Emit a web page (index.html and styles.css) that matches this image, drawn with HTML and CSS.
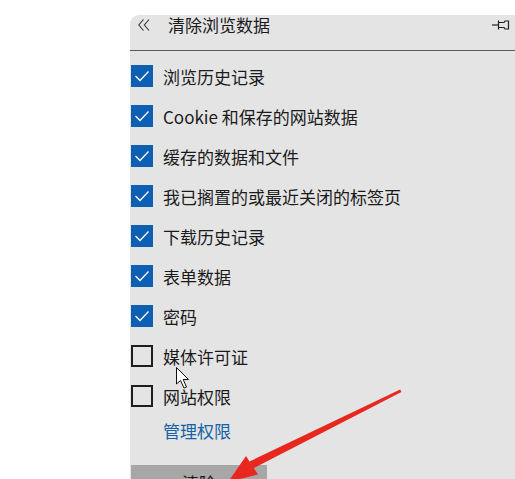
FILE: index.html
```html
<!DOCTYPE html>
<html lang="zh-CN">
<head>
    <meta charset="UTF-8">
    <meta name="viewport" content="width=device-width, initial-scale=1.0">
    <title>清除浏览数据</title>
    <link rel="stylesheet" href="styles.css">
</head>
<body>
    <div class="panel">
        <div class="panel-header">
            <svg class="back" width="12" height="12" viewBox="0 0 12 12">
                <polyline points="5.5,0.5 0.8,6 5.5,11.5" fill="none" stroke="#333" stroke-width="1.1"/>
                <polyline points="11,0.5 6.3,6 11,11.5" fill="none" stroke="#333" stroke-width="1.1"/>
            </svg>
            <span class="title">清除浏览数据</span>
            <svg class="pin" width="18" height="12" viewBox="0 0 18 12">
                <line x1="0" y1="6" x2="6" y2="6" stroke="#222" stroke-width="1.2"/>
                <line x1="6.5" y1="1.5" x2="6.5" y2="10.5" stroke="#222" stroke-width="1.2"/>
                <path d="M7 3.5 H12 L13 2 H16.5 V10 H13 L12 8.5 H7" fill="none" stroke="#222" stroke-width="1.2"/>
            </svg>
        </div>

        <ul class="options">
            <li class="option"><span class="box checked"><svg viewBox="0 0 22 22"><polyline points="4.5,11 9,15.5 17.5,6.5"/></svg></span>浏览历史记录</li>
            <li class="option"><span class="box checked"><svg viewBox="0 0 22 22"><polyline points="4.5,11 9,15.5 17.5,6.5"/></svg></span>Cookie 和保存的网站数据</li>
            <li class="option"><span class="box checked"><svg viewBox="0 0 22 22"><polyline points="4.5,11 9,15.5 17.5,6.5"/></svg></span>缓存的数据和文件</li>
            <li class="option"><span class="box checked"><svg viewBox="0 0 22 22"><polyline points="4.5,11 9,15.5 17.5,6.5"/></svg></span>我已搁置的或最近关闭的标签页</li>
            <li class="option"><span class="box checked"><svg viewBox="0 0 22 22"><polyline points="4.5,11 9,15.5 17.5,6.5"/></svg></span>下载历史记录</li>
            <li class="option"><span class="box checked"><svg viewBox="0 0 22 22"><polyline points="4.5,11 9,15.5 17.5,6.5"/></svg></span>表单数据</li>
            <li class="option"><span class="box checked"><svg viewBox="0 0 22 22"><polyline points="4.5,11 9,15.5 17.5,6.5"/></svg></span>密码</li>
            <li class="option"><span class="box"></span>媒体许可证</li>
            <li class="option"><span class="box"></span>网站权限</li>
        </ul>

        <a class="manage-link" href="#">管理权限</a>

        <button class="clear-btn" type="button">清除</button>
    </div>

    <!--标注：鼠标指针和红色箭头 -->
    <svg class="overlay" width="515" height="479" viewBox="0 0 515 479">
        <path d="M176.5 367.5 V384 L180.5 380.5 L184 388 L186.5 387 L183.2 379.5 L188.5 379.5 Z" fill="#fff" stroke="#111" stroke-width="1"/>
        <polygon points="401.4,392 400.2,389.6 249.5,461.5 253,468.5" fill="#e8281e"/>
        <polygon points="258,474.5 246,456 228,482" fill="#e8281e"/>
    </svg>
</body>
</html>
```

FILE: styles.css
```css
* {
    box-sizing: border-box;
}
body {
    margin: 0;
    background-color: #fff;
    font-family: "Noto Sans CJK SC", "Noto Sans", sans-serif;
    color: #1b1b1b;
    overflow: hidden;
    height: 479px;
}
.panel {
    margin-top: 15px;
    margin-left: 130px;
    width: 385px;
    height: 464px;
    background-color: #e4e4e4;
    border-radius: 9px 0 0 0;
}
.panel-header {
    display: flex;
    align-items: center;
    height: 36px;
    padding: 0 5px 15px 8px;
    border-bottom: 1px solid #5a5a5a;
}
.back {
    flex: none;
}
.title {
    margin-left: 18px;
    font-size: 17px;
    line-height: 20px;
    flex: 1;
}
.pin {
    flex: none;
}
.options {
    list-style: none;
    margin: 0;
    padding: 5px 0 0 1px;
}
.option {
    display: flex;
    align-items: center;
    height: 40px;
    font-size: 17px;
    gap: 10px;
}
.box {
    flex: none;
    width: 22px;
    height: 22px;
    border: 2px solid #1e1e1e;
}
.box.checked {
    border: none;
    background-color: #0c5fb3;
}
.box svg {
    display: block;
    width: 22px;
    height: 22px;
    fill: none;
    stroke: #fff;
    stroke-width: 1.3;
}
.manage-link {
    display: block;
    margin-left: 33px;
    height: 30px;
    line-height: 30px;
    font-size: 17px;
    color: #1463a5;
    text-decoration: none;
}
.clear-btn {
    display: block;
    margin: 19px 0 0 1px;
    width: 136px;
    height: 34px;
    border: none;
    background-color: #a7a7a7;
    font-family: inherit;
    font-size: 17px;
    color: #1b1b1b;
    padding: 0;
}
.overlay {
    position: absolute;
    top: 0;
    left: 0;
    pointer-events: none;
}
```
